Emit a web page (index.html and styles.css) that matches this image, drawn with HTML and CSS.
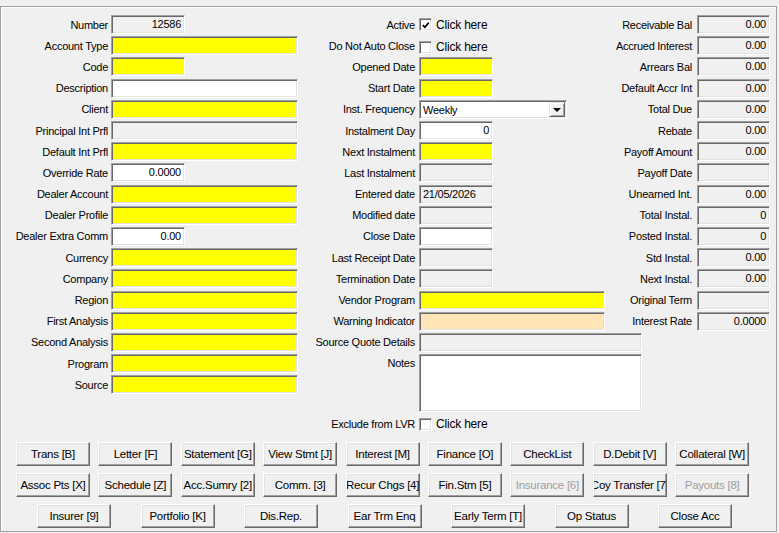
FILE: index.html
```html
<!DOCTYPE html>
<html lang="en">
<head>
    <meta charset="UTF-8">
    <title>Account</title>
    <link rel="stylesheet" href="styles.css">
</head>
<body>
    <div class="frame">
        <div class="columns">
            <!-- left column -->
            <div class="col col-left">
                <label>Number</label><div class="fld grey short num">12586</div>
                <label>Account Type</label><div class="fld yellow"></div>
                <label>Code</label><div class="fld yellow short"></div>
                <label>Description</label><div class="fld white"></div>
                <label>Client</label><div class="fld yellow"></div>
                <label>Principal Int Prfl</label><div class="fld grey"></div>
                <label>Default Int Prfl</label><div class="fld yellow"></div>
                <label>Override Rate</label><div class="fld white short num">0.0000</div>
                <label>Dealer Account</label><div class="fld yellow"></div>
                <label>Dealer Profile</label><div class="fld yellow"></div>
                <label>Dealer Extra Comm</label><div class="fld white short num">0.00</div>
                <label>Currency</label><div class="fld yellow"></div>
                <label>Company</label><div class="fld yellow"></div>
                <label>Region</label><div class="fld yellow"></div>
                <label>First Analysis</label><div class="fld yellow"></div>
                <label>Second Analysis</label><div class="fld yellow"></div>
                <label>Program</label><div class="fld yellow"></div>
                <label>Source</label><div class="fld yellow"></div>
            </div>

            <!-- middle column -->
            <div class="col col-mid">
                <label>Active</label>
                <div class="check">
                    <span class="box"><svg width="11" height="11" viewBox="0 0 11 11"><polyline points="2,5 4.2,7.4 8.6,2.4" fill="none" stroke="#000" stroke-width="1.9"/></svg></span>
                    Click here
                </div>
                <label>Do Not Auto Close</label>
                <div class="check low"><span class="box"></span>Click here</div>
                <label>Opened Date</label><div class="fld yellow short"></div>
                <label>Start Date</label><div class="fld yellow short"></div>
                <label>Inst. Frequency</label>
                <div class="fld white combo">
                    <span>Weekly</span>
                    <span class="drop"><i></i></span>
                </div>
                <label>Instalment Day</label><div class="fld white short num">0</div>
                <label>Next Instalment</label><div class="fld yellow short"></div>
                <label>Last Instalment</label><div class="fld grey short"></div>
                <label>Entered date</label><div class="fld grey short">21/05/2026</div>
                <label>Modified date</label><div class="fld grey short"></div>
                <label>Close Date</label><div class="fld white short"></div>
                <label>Last Receipt Date</label><div class="fld grey short"></div>
                <label>Termination Date</label><div class="fld grey short"></div>
                <label>Vendor Program</label><div class="fld yellow"></div>
                <label>Warning Indicator</label><div class="fld peach"></div>
                <label>Source Quote Details</label><div class="fld grey wide"></div>
                <label class="top">Notes</label><div class="fld white wide notes"></div>
                <label>Exclude from LVR</label>
                <div class="check"><span class="box"></span>Click here</div>
            </div>

            <!-- right column -->
            <div class="col col-right">
                <label>Receivable Bal</label><div class="fld grey num">0.00</div>
                <label>Accrued Interest</label><div class="fld grey num">0.00</div>
                <label>Arrears Bal</label><div class="fld grey num">0.00</div>
                <label>Default Accr Int</label><div class="fld grey num">0.00</div>
                <label>Total Due</label><div class="fld grey num">0.00</div>
                <label>Rebate</label><div class="fld grey num">0.00</div>
                <label>Payoff Amount</label><div class="fld grey num">0.00</div>
                <label>Payoff Date</label><div class="fld grey num"></div>
                <label>Unearned Int.</label><div class="fld grey num">0.00</div>
                <label>Total Instal.</label><div class="fld grey num">0</div>
                <label>Posted Instal.</label><div class="fld grey num">0</div>
                <label>Std Instal.</label><div class="fld grey num">0.00</div>
                <label>Next Instal.</label><div class="fld grey num">0.00</div>
                <label>Original Term</label><div class="fld grey num"></div>
                <label>Interest Rate</label><div class="fld grey num">0.0000</div>
            </div>
        </div>

        <div class="buttons">
            <div class="btn-row">
                <div class="btn">Trans [B]</div>
                <div class="btn">Letter [F]</div>
                <div class="btn">Statement [G]</div>
                <div class="btn">View Stmt [J]</div>
                <div class="btn">Interest [M]</div>
                <div class="btn">Finance [O]</div>
                <div class="btn">CheckList</div>
                <div class="btn">D.Debit [V]</div>
                <div class="btn">Collateral [W]</div>
            </div>
            <div class="btn-row">
                <div class="btn">Assoc Pts [X]</div>
                <div class="btn">Schedule [Z]</div>
                <div class="btn">Acc.Sumry [2]</div>
                <div class="btn">Comm. [3]</div>
                <div class="btn">Recur Chgs [4]</div>
                <div class="btn">Fin.Stm [5]</div>
                <div class="btn disabled">Insurance [6]</div>
                <div class="btn">Coy Transfer [7]</div>
                <div class="btn disabled">Payouts [8]</div>
            </div>
            <div class="btn-row last">
                <div class="btn">Insurer [9]</div>
                <div class="btn">Portfolio [K]</div>
                <div class="btn">Dis.Rep.</div>
                <div class="btn">Ear Trm Enq</div>
                <div class="btn">Early Term [T]</div>
                <div class="btn">Op Status</div>
                <div class="btn">Close Acc</div>
            </div>
        </div>
    </div>
</body>
</html>
```

FILE: styles.css
```css
* {
    box-sizing: border-box;
    margin: 0;
    padding: 0;
}

body {
    background: #f0f0f0;
    font-family: "Liberation Sans", Arial, sans-serif;
    font-size: 11px;
    letter-spacing: -0.25px;
    color: #000;
}

.frame {
    margin-top: 6px;
    width: 777px;
    height: 526px;
    border: 1px solid #a0a0a0;
    box-shadow: inset 1px 1px 0 #fff;
    padding-top: 7px;
}

.columns {
    display: flex;
    align-items: flex-start;
}

.col {
    display: grid;
    grid-auto-rows: 21.2px;
    align-items: center;
}

.col label {
    text-align: right;
    white-space: nowrap;
}

.col label.top {
    align-self: start;
    line-height: 21px;
}

.col-left {
    grid-template-columns: 107px 187px;
    column-gap: 3px;
    width: 297px;
}

.col-mid {
    grid-template-columns: 117px 186px;
    grid-template-rows: repeat(16, 21.2px) 60.5px 21px;
    column-gap: 4px;
    width: 307px;
}

.col-right {
    grid-template-columns: 87px 73px;
    column-gap: 5px;
}

/* sunken text box */
.fld {
    height: 19px;
    width: 100%;
    border: 1px solid;
    border-color: #a0a0a0 #fff #fff #a0a0a0;
    box-shadow: inset 1px 1px 0 #696969, inset -1px -1px 0 #e3e3e3;
    padding: 0 3px;
    line-height: 17px;
    white-space: nowrap;
    overflow: hidden;
}

.fld.short { width: 74px; }
.fld.wide { width: 223px; }
.fld.num { text-align: right; }

.fld.notes {
    height: 58px;
    align-self: start;
    margin-top: 1px;
}

.yellow { background: #ffff00; }
.white { background: #fff; }
.grey { background: #f0f0f0; }
.peach { background: #ffe4b8; }

.combo {
    width: 148px;
    display: flex;
    justify-content: space-between;
    padding: 0 1px 0 3px;
}

.combo span:first-child {
    line-height: 19px;
}

.drop {
    width: 16px;
    height: 15px;
    margin-top: 1px;
    background: #f0f0f0;
    border: 1px solid;
    border-color: #e3e3e3 #696969 #696969 #e3e3e3;
    box-shadow: inset 1px 1px 0 #fff, inset -1px -1px 0 #a0a0a0;
    display: flex;
    align-items: center;
    justify-content: center;
}

.drop i {
    width: 0;
    height: 0;
    border-left: 4px solid transparent;
    border-right: 4px solid transparent;
    border-top: 4px solid #000;
    margin-top: 1px;
}

.check {
    display: flex;
    align-items: center;
    gap: 4px;
    font-size: 12px;
    letter-spacing: -0.2px;
}

.check.low {
    margin-top: 3px;
}

.box {
    width: 13px;
    height: 13px;
    background: #fff;
    border: 1px solid;
    border-color: #a0a0a0 #fff #fff #a0a0a0;
    box-shadow: inset 1px 1px 0 #696969, inset -1px -1px 0 #e3e3e3;
    display: flex;
    align-items: center;
    justify-content: center;
}

.box svg {
    display: block;
    margin: 1px 0 0 1px;
}

/* command buttons */
.buttons {
    margin-top: 7px;
    display: flex;
    flex-direction: column;
    gap: 7px;
}

.btn-row {
    display: flex;
    gap: 8.4px;
    padding-left: 15px;
}

.btn-row.last {
    gap: 29.5px;
    padding-left: 36px;
}

.btn {
    width: 74px;
    height: 24px;
    flex: none;
    background: #f0f0f0;
    border: 1px solid;
    border-color: #fff #696969 #696969 #fff;
    box-shadow: inset -1px -1px 0 #a0a0a0, inset 1px 1px 0 #e3e3e3;
    display: flex;
    align-items: center;
    justify-content: center;
    white-space: nowrap;
    overflow: hidden;
    font-size: 11.5px;
}

.btn.disabled {
    color: #a0a0a0;
}
```
